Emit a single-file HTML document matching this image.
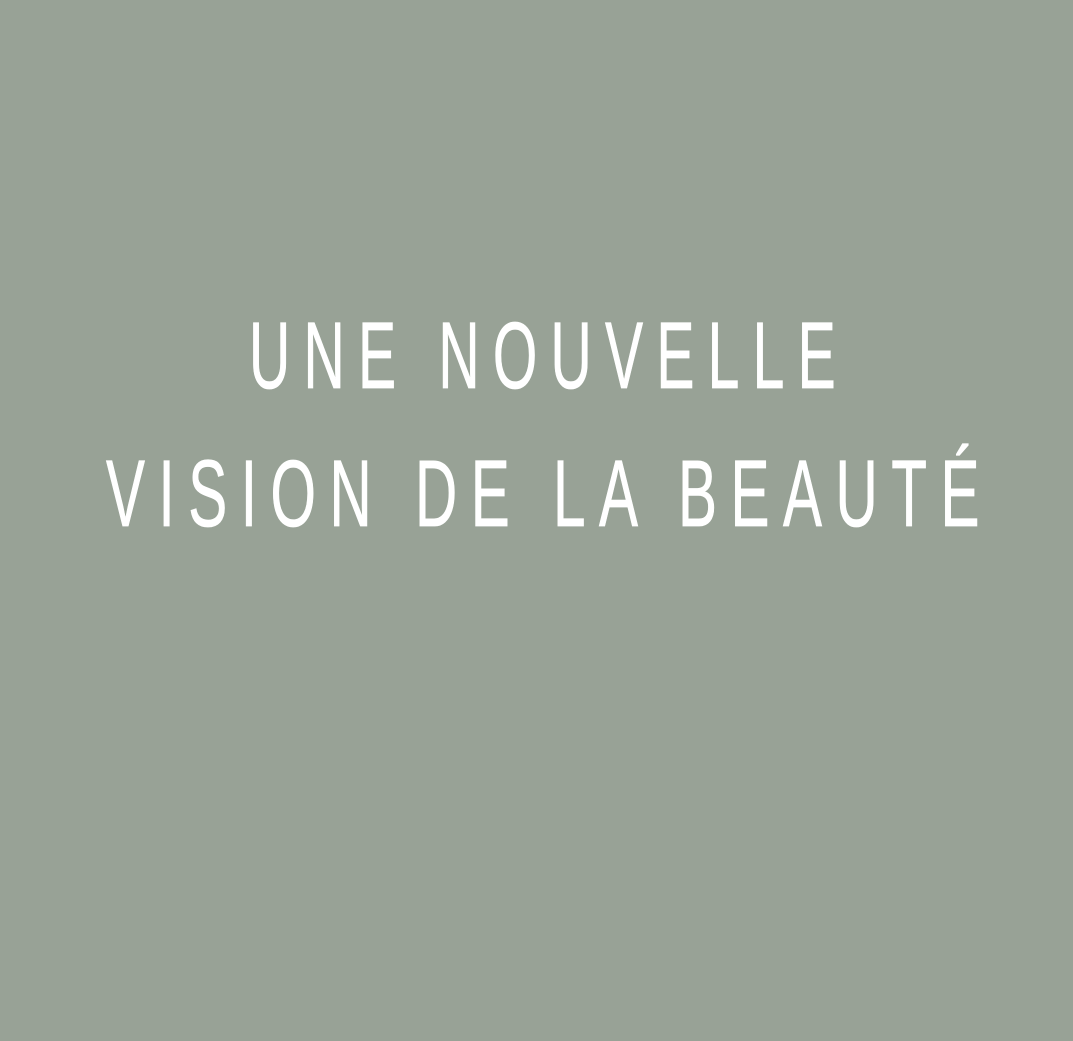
<!DOCTYPE html>
<html><head><meta charset="utf-8"><style>
html,body{margin:0;padding:0;background:#98a296;width:1073px;height:1041px;overflow:hidden}
</style></head><body>
<svg width="1073" height="1041" viewBox="0 0 1073 1041" xmlns="http://www.w3.org/2000/svg">
<rect width="1073" height="1041" fill="#98a296"/>
<g fill="#ffffff" stroke="#ffffff" stroke-width="0.8" font-family="'Liberation Sans Narrow','Liberation Sans',sans-serif" font-size="95" style="letter-spacing:22px">
<text x="249" y="388" textLength="600" lengthAdjust="spacingAndGlyphs">UNE NOUVELLE</text>
<text x="106" y="526" textLength="887" lengthAdjust="spacingAndGlyphs">VISION DE LA BEAUTÉ</text>
</g>
</svg>
</body></html>
